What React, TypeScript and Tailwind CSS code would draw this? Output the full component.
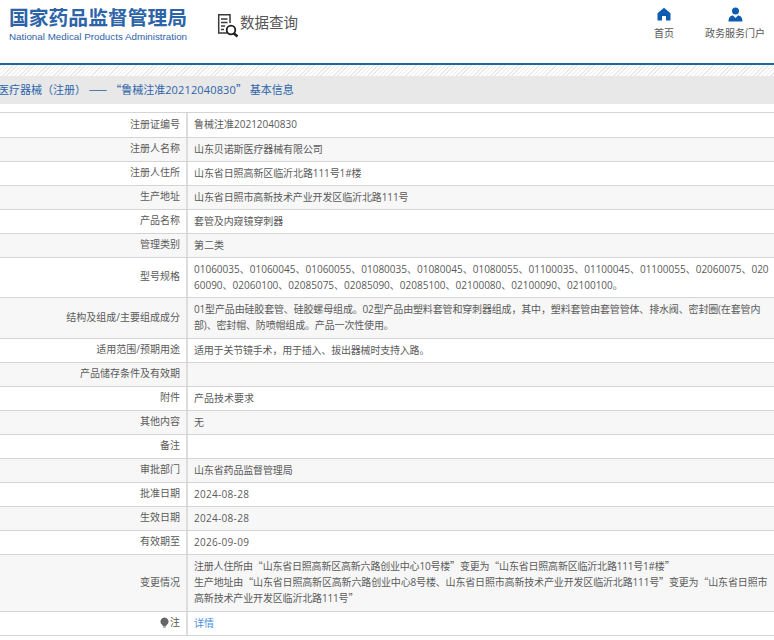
const Q = ({ c }: { c: string }) => <span className="font-['Noto_Sans_CJK_SC',sans-serif]">{c}</span>;

const rows: { label: React.ReactNode; value: React.ReactNode; h: string; shade?: boolean; v?: string }[] = [
  { label: "注册证编号", value: "鲁械注准20212040830", h: "h-[25px]" },
  { label: "注册人名称", value: "山东贝诺斯医疗器械有限公司", h: "h-[24px]", shade: true, v: "tracking-[-0.1px]" },
  { label: "注册人住所", value: "山东省日照高新区临沂北路111号1#楼", h: "h-[24px]", v: "tracking-[-0.1px]" },
  { label: "生产地址", value: "山东省日照市高新技术产业开发区临沂北路111号", h: "h-[24px]", shade: true, v: "tracking-[-0.12px]" },
  { label: "产品名称", value: "套管及内窥镜穿刺器", h: "h-[24px]", v: "tracking-[-0.1px]" },
  { label: "管理类别", value: "第二类", h: "h-[24px]", shade: true },
  {
    label: "型号规格",
    value: "01060035、01060045、01060055、01080035、01080045、01080055、01100035、01100045、01100055、02060075、02060090、02060100、02085075、02085090、02085100、02100080、02100090、02100100。",
    h: "h-[40px]",
    v: "pt-[1px]",
  },
  {
    label: "结构及组成/主要组成成分",
    value: (
      <>
        01型产品由硅胶套管、硅胶螺母组成。02型产品由塑料套管和穿刺器组成，其中，塑料套管由套管管体、排水阀、密封圈(在套管内
        <br />
        部)、密封帽、防喷帽组成。产品一次性使用。
      </>
    ),
    h: "h-[41px]",
    shade: true,
    v: "tracking-[-0.16px]",
  },
  { label: "适用范围/预期用途", value: "适用于关节镜手术，用于插入、拔出器械时支持入路。", h: "h-[24px]", v: "tracking-[-0.2px]" },
  { label: "产品储存条件及有效期", value: "", h: "h-[24px]", shade: true },
  { label: "附件", value: "产品技术要求", h: "h-[24px]" },
  { label: "其他内容", value: "无", h: "h-[24px]", shade: true },
  { label: "备注", value: "", h: "h-[24px]" },
  { label: "审批部门", value: "山东省药品监督管理局", h: "h-[24px]", shade: true, v: "tracking-[-0.15px]" },
  { label: "批准日期", value: "2024-08-28", h: "h-[24px]", v: "tracking-[0.3px]" },
  { label: "生效日期", value: "2024-08-28", h: "h-[24px]", shade: true, v: "tracking-[0.3px]" },
  { label: "有效期至", value: "2026-09-09", h: "h-[24px]", v: "tracking-[0.3px]" },
  {
    label: "变更情况",
    value: (
      <>
        <span className="tracking-[-0.2px]">
          注册人住所由<Q c="“" />山东省日照高新区高新六路创业中心10号楼<Q c="”" />变更为<Q c="“" />山东省日照高新区临沂北路111号1#楼<Q c="”" />
        </span>
        <br />
        <span className="tracking-[-0.16px]">
          生产地址由<Q c="“" />山东省日照高新区高新六路创业中心8号楼、山东省日照市高新技术产业开发区临沂北路111号<Q c="”" />变更为<Q c="“" />山东省日照市高新技术产业开发区临沂北路111号<Q c="”" />
        </span>
      </>
    ),
    h: "h-[57px]",
    shade: true,
  },
  {
    label: (
      <span className="inline-flex items-center gap-[1px]">
        <svg width="9" height="11" viewBox="0 0 9 11">
          <path d="M4.500 0.500a4 4 0 0 0-2.400 7.200L3 9h3l.9-1.300A4 4 0 0 0 4.500.5z" fill="#666" />
          <rect x="3" y="9.300" width="3" height="1.400" fill="#999" />
        </svg>
        注
      </span>
    ),
    value: <span className="text-[#4a8fdf]">详情</span>,
    h: "h-[24px]",
  },
];

export default function App() {
  return (
    <div className="w-[774px] h-[640px] overflow-hidden bg-white text-[#5a5a5a] text-[10px] font-['Open_Sans','Noto_Sans_CJK_SC',sans-serif]">
      <header className="h-[65px] border-b-2 border-[#1f6a94] flex">
        <div className="w-[217px] pl-[9px] pt-[5px] shrink-0">
          <div className="text-[#2d64a8] text-[19.8px] leading-[26px] font-bold whitespace-nowrap">国家药品监督管理局</div>
          <div className="text-[#2d64a8] text-[9.8px] leading-[12px] whitespace-nowrap font-['Liberation_Sans',sans-serif]">National Medical Products Administration</div>
        </div>
        <div className="flex items-start pt-[12px] h-full">
          <svg width="24" height="26" viewBox="0 0 24 26" fill="none" className="shrink-0">
            <path d="M10 21H1.700V2.700H13V11" stroke="#3a3a3a" strokeWidth="1.500" />
            <path d="M4 7h6.500M4 10.500h6.500M4 14h4M4 17.500h3" stroke="#3a3a3a" strokeWidth="1.400" />
            <circle cx="14" cy="18" r="4.300" stroke="#1c1c1c" strokeWidth="1.800" />
            <path d="M17 21.500l3.500 3" stroke="#1c1c1c" strokeWidth="2.400" />
          </svg>
          <span className="text-[14.5px] leading-[22px] text-[#555] ml-[-2px] pl-[1px]">数据查询</span>
        </div>
        <nav className="ml-auto flex text-[#555]">
          <div className="w-[64px] flex flex-col items-center pt-[7px]">
            <svg width="14" height="14" viewBox="0 0 14 14" className="shrink-0">
              <path d="M7 0.800L0.500 6.200V13.500H5V9h4v4.500h4.500V6.200z" fill="#0e5bb0" />
            </svg>
            <span className="mt-[5px] leading-[14px]">首页</span>
          </div>
          <div className="w-[78px] flex flex-col items-center pt-[7px]">
            <svg width="15" height="15" viewBox="0 0 15 15" className="shrink-0">
              <circle cx="7.500" cy="4" r="3.500" fill="#0e5bb0" />
              <path d="M0.500 14.500c0-4 2-6 4.500-6L7.500 11 10 8.500c2.500 0 4.500 2 4.500 6z" fill="#0e5bb0" />
            </svg>
            <span className="mt-[4px] leading-[14px] whitespace-nowrap">政务服务门户</span>
          </div>
        </nav>
      </header>
      <div className="h-[11px] bg-[repeating-linear-gradient(135deg,#e9e9e9_0,#e9e9e9_1px,#fff_1px,#fff_3px)]" />
      <div className="h-[28px] bg-[#e8e8e8] text-[#2d64a8] text-[11px] leading-[27px] whitespace-nowrap">
        <div className="ml-[-2px]">
          医疗器械（注册） <Q c="——" /> <Q c="“" />鲁械注准<span className="tracking-[0.15px]">20212040830</span><Q c="”" /> 基本信息
        </div>
      </div>
      <div className="mt-[8px] border-t border-[#d4d4d4]">
        {rows.map((r, i) => (
          <div key={i} className={`flex items-stretch border-b border-[#d4d4d4] ${r.shade ? "bg-[#f7f7f7]" : ""} ${r.h}`}>
            <div className="w-[188px] shrink-0 border-r-2 border-[#ddd] pr-[6px] pb-[2px] flex items-center justify-end whitespace-nowrap">{r.label}</div>
            <div className="flex-1 min-w-0 pl-[6px] pr-[2px] pb-[2px] flex items-center leading-[16px] break-all">
              <div className={r.v}>{r.value}</div>
            </div>
          </div>
        ))}
      </div>
    </div>
  );
}
